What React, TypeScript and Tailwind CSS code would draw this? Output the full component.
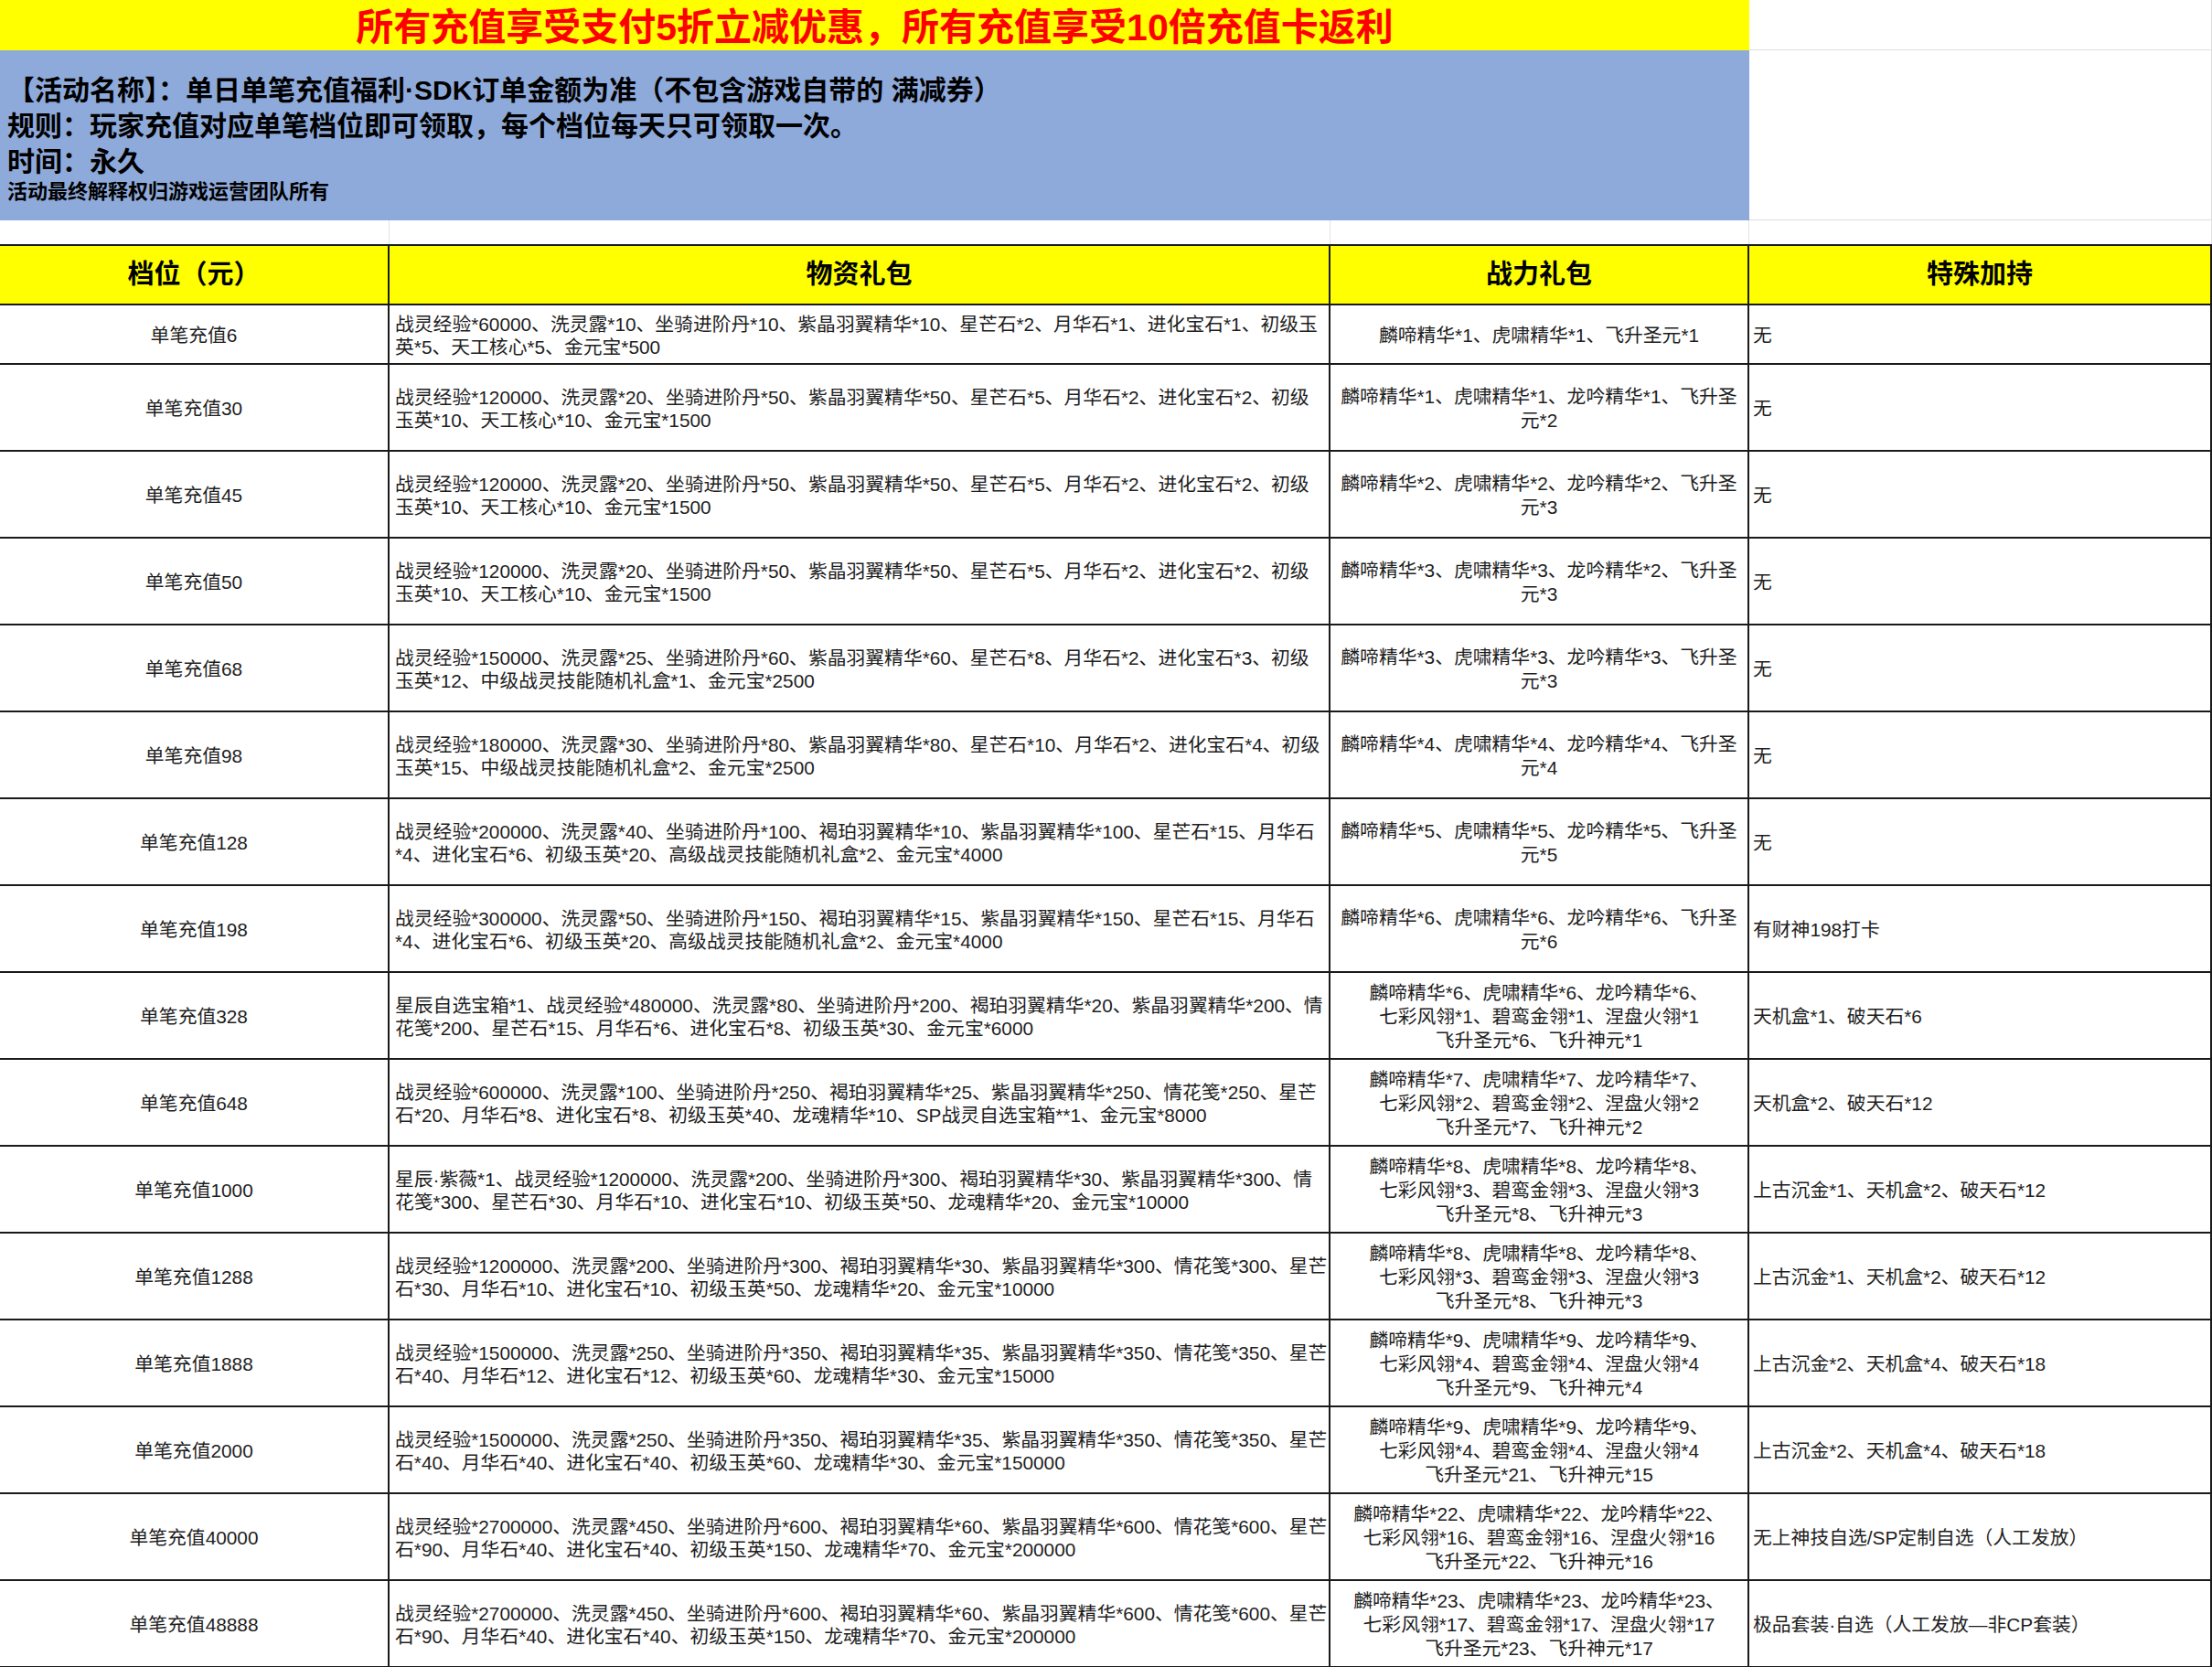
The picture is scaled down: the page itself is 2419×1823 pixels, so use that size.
type Row = {
  tier: string;
  goods: string[];
  power: string[];
  extra: string;
};

const rows: Row[] = [
  {
    tier: "单笔充值6",
    goods: [
      "战灵经验*60000、洗灵露*10、坐骑进阶丹*10、紫晶羽翼精华*10、星芒石*2、月华石*1、进化宝石*1、初级玉",
      "英*5、天工核心*5、金元宝*500",
    ],
    power: ["麟啼精华*1、虎啸精华*1、飞升圣元*1"],
    extra: "无",
  },
  {
    tier: "单笔充值30",
    goods: [
      "战灵经验*120000、洗灵露*20、坐骑进阶丹*50、紫晶羽翼精华*50、星芒石*5、月华石*2、进化宝石*2、初级",
      "玉英*10、天工核心*10、金元宝*1500",
    ],
    power: ["麟啼精华*1、虎啸精华*1、龙吟精华*1、飞升圣", "元*2"],
    extra: "无",
  },
  {
    tier: "单笔充值45",
    goods: [
      "战灵经验*120000、洗灵露*20、坐骑进阶丹*50、紫晶羽翼精华*50、星芒石*5、月华石*2、进化宝石*2、初级",
      "玉英*10、天工核心*10、金元宝*1500",
    ],
    power: ["麟啼精华*2、虎啸精华*2、龙吟精华*2、飞升圣", "元*3"],
    extra: "无",
  },
  {
    tier: "单笔充值50",
    goods: [
      "战灵经验*120000、洗灵露*20、坐骑进阶丹*50、紫晶羽翼精华*50、星芒石*5、月华石*2、进化宝石*2、初级",
      "玉英*10、天工核心*10、金元宝*1500",
    ],
    power: ["麟啼精华*3、虎啸精华*3、龙吟精华*2、飞升圣", "元*3"],
    extra: "无",
  },
  {
    tier: "单笔充值68",
    goods: [
      "战灵经验*150000、洗灵露*25、坐骑进阶丹*60、紫晶羽翼精华*60、星芒石*8、月华石*2、进化宝石*3、初级",
      "玉英*12、中级战灵技能随机礼盒*1、金元宝*2500",
    ],
    power: ["麟啼精华*3、虎啸精华*3、龙吟精华*3、飞升圣", "元*3"],
    extra: "无",
  },
  {
    tier: "单笔充值98",
    goods: [
      "战灵经验*180000、洗灵露*30、坐骑进阶丹*80、紫晶羽翼精华*80、星芒石*10、月华石*2、进化宝石*4、初级",
      "玉英*15、中级战灵技能随机礼盒*2、金元宝*2500",
    ],
    power: ["麟啼精华*4、虎啸精华*4、龙吟精华*4、飞升圣", "元*4"],
    extra: "无",
  },
  {
    tier: "单笔充值128",
    goods: [
      "战灵经验*200000、洗灵露*40、坐骑进阶丹*100、褐珀羽翼精华*10、紫晶羽翼精华*100、星芒石*15、月华石",
      "*4、进化宝石*6、初级玉英*20、高级战灵技能随机礼盒*2、金元宝*4000",
    ],
    power: ["麟啼精华*5、虎啸精华*5、龙吟精华*5、飞升圣", "元*5"],
    extra: "无",
  },
  {
    tier: "单笔充值198",
    goods: [
      "战灵经验*300000、洗灵露*50、坐骑进阶丹*150、褐珀羽翼精华*15、紫晶羽翼精华*150、星芒石*15、月华石",
      "*4、进化宝石*6、初级玉英*20、高级战灵技能随机礼盒*2、金元宝*4000",
    ],
    power: ["麟啼精华*6、虎啸精华*6、龙吟精华*6、飞升圣", "元*6"],
    extra: "有财神198打卡",
  },
  {
    tier: "单笔充值328",
    goods: [
      "星辰自选宝箱*1、战灵经验*480000、洗灵露*80、坐骑进阶丹*200、褐珀羽翼精华*20、紫晶羽翼精华*200、情",
      "花笺*200、星芒石*15、月华石*6、进化宝石*8、初级玉英*30、金元宝*6000",
    ],
    power: ["麟啼精华*6、虎啸精华*6、龙吟精华*6、", "七彩风翎*1、碧鸾金翎*1、涅盘火翎*1", "飞升圣元*6、飞升神元*1"],
    extra: "天机盒*1、破天石*6",
  },
  {
    tier: "单笔充值648",
    goods: [
      "战灵经验*600000、洗灵露*100、坐骑进阶丹*250、褐珀羽翼精华*25、紫晶羽翼精华*250、情花笺*250、星芒",
      "石*20、月华石*8、进化宝石*8、初级玉英*40、龙魂精华*10、SP战灵自选宝箱**1、金元宝*8000",
    ],
    power: ["麟啼精华*7、虎啸精华*7、龙吟精华*7、", "七彩风翎*2、碧鸾金翎*2、涅盘火翎*2", "飞升圣元*7、飞升神元*2"],
    extra: "天机盒*2、破天石*12",
  },
  {
    tier: "单笔充值1000",
    goods: [
      "星辰·紫薇*1、战灵经验*1200000、洗灵露*200、坐骑进阶丹*300、褐珀羽翼精华*30、紫晶羽翼精华*300、情",
      "花笺*300、星芒石*30、月华石*10、进化宝石*10、初级玉英*50、龙魂精华*20、金元宝*10000",
    ],
    power: ["麟啼精华*8、虎啸精华*8、龙吟精华*8、", "七彩风翎*3、碧鸾金翎*3、涅盘火翎*3", "飞升圣元*8、飞升神元*3"],
    extra: "上古沉金*1、天机盒*2、破天石*12",
  },
  {
    tier: "单笔充值1288",
    goods: [
      "战灵经验*1200000、洗灵露*200、坐骑进阶丹*300、褐珀羽翼精华*30、紫晶羽翼精华*300、情花笺*300、星芒",
      "石*30、月华石*10、进化宝石*10、初级玉英*50、龙魂精华*20、金元宝*10000",
    ],
    power: ["麟啼精华*8、虎啸精华*8、龙吟精华*8、", "七彩风翎*3、碧鸾金翎*3、涅盘火翎*3", "飞升圣元*8、飞升神元*3"],
    extra: "上古沉金*1、天机盒*2、破天石*12",
  },
  {
    tier: "单笔充值1888",
    goods: [
      "战灵经验*1500000、洗灵露*250、坐骑进阶丹*350、褐珀羽翼精华*35、紫晶羽翼精华*350、情花笺*350、星芒",
      "石*40、月华石*12、进化宝石*12、初级玉英*60、龙魂精华*30、金元宝*15000",
    ],
    power: ["麟啼精华*9、虎啸精华*9、龙吟精华*9、", "七彩风翎*4、碧鸾金翎*4、涅盘火翎*4", "飞升圣元*9、飞升神元*4"],
    extra: "上古沉金*2、天机盒*4、破天石*18",
  },
  {
    tier: "单笔充值2000",
    goods: [
      "战灵经验*1500000、洗灵露*250、坐骑进阶丹*350、褐珀羽翼精华*35、紫晶羽翼精华*350、情花笺*350、星芒",
      "石*40、月华石*40、进化宝石*40、初级玉英*60、龙魂精华*30、金元宝*150000",
    ],
    power: ["麟啼精华*9、虎啸精华*9、龙吟精华*9、", "七彩风翎*4、碧鸾金翎*4、涅盘火翎*4", "飞升圣元*21、飞升神元*15"],
    extra: "上古沉金*2、天机盒*4、破天石*18",
  },
  {
    tier: "单笔充值40000",
    goods: [
      "战灵经验*2700000、洗灵露*450、坐骑进阶丹*600、褐珀羽翼精华*60、紫晶羽翼精华*600、情花笺*600、星芒",
      "石*90、月华石*40、进化宝石*40、初级玉英*150、龙魂精华*70、金元宝*200000",
    ],
    power: ["麟啼精华*22、虎啸精华*22、龙吟精华*22、", "七彩风翎*16、碧鸾金翎*16、涅盘火翎*16", "飞升圣元*22、飞升神元*16"],
    extra: "无上神技自选/SP定制自选（人工发放）",
  },
  {
    tier: "单笔充值48888",
    goods: [
      "战灵经验*2700000、洗灵露*450、坐骑进阶丹*600、褐珀羽翼精华*60、紫晶羽翼精华*600、情花笺*600、星芒",
      "石*90、月华石*40、进化宝石*40、初级玉英*150、龙魂精华*70、金元宝*200000",
    ],
    power: ["麟啼精华*23、虎啸精华*23、龙吟精华*23、", "七彩风翎*17、碧鸾金翎*17、涅盘火翎*17", "飞升圣元*23、飞升神元*17"],
    extra: "极品套装·自选（人工发放—非CP套装）",
  },
];

const grid = "grid grid-cols-[426px_1029px_458px_506px]";

export default function App() {
  return (
    <div className="w-[2419px] bg-white text-[#1e1e1e] font-['Liberation_Sans','Noto_Sans_CJK_SC',sans-serif]">
      {/* notice block */}
      <div className="grid grid-cols-[1913px_506px]">
        <div className="h-[55px] bg-[#ffff00] flex items-center justify-center pt-[6px]">
          <span className="text-[41px] font-bold text-[#ff0000] leading-none whitespace-nowrap">
            所有充值享受支付5折立减优惠，所有充值享受10倍充值卡返利
          </span>
        </div>
        <div className="h-[55px] border-b border-[#dcdcdc] border-r" />
        <div className="h-[186px] bg-[#8eaadb] pl-2 pt-[24px] font-bold text-black">
          <p className="text-[30px] leading-[39px] whitespace-nowrap">
            【活动名称】：单日单笔充值福利·SDK订单金额为准（不包含游戏自带的 满减券）
          </p>
          <p className="text-[30px] leading-[39px] whitespace-nowrap">
            规则：玩家充值对应单笔档位即可领取，每个档位每天只可领取一次。
          </p>
          <p className="text-[30px] leading-[39px]">时间：永久</p>
          <p className="text-[22px] leading-[28px]">活动最终解释权归游戏运营团队所有</p>
        </div>
        <div className="h-[186px] border-b border-r border-[#dcdcdc]" />
      </div>

      {/* spacer row */}
      <div className={`${grid} h-[26px]`}>
        <div className="border-r border-[#e2e2e2]" />
        <div className="border-r border-[#e2e2e2]" />
        <div className="border-r border-[#e2e2e2]" />
        <div className="border-r border-[#e2e2e2]" />
      </div>

      {/* table */}
      <div className="border-t-2 border-[#1a1a1a]">
        <div className={`${grid} h-[65px] bg-[#ffff00] border-b-2 border-[#1a1a1a] text-[29px] font-bold text-black`}>
          <div className="flex items-center justify-center border-r-2 border-[#1a1a1a]">档位（元）</div>
          <div className="flex items-center justify-center border-r-2 border-[#1a1a1a]">物资礼包</div>
          <div className="flex items-center justify-center border-r-2 border-[#1a1a1a]">战力礼包</div>
          <div className="flex items-center justify-center border-r-2 border-[#1a1a1a]">特殊加持</div>
        </div>

        {rows.map((r, i) => (
          <div
            key={r.tier}
            className={`${grid} ${i === 0 ? "h-[65px]" : "h-[95px]"} border-b-2 border-[#1a1a1a] text-[20.8px]`}
          >
            <div className="flex items-center justify-center border-r-2 border-[#1a1a1a] whitespace-nowrap pt-[2px]">
              {r.tier}
            </div>
            <div className="flex flex-col justify-center pl-[6px] pt-[2px] border-r-2 border-[#1a1a1a] leading-[25px] overflow-hidden">
              {r.goods.map((l) => (
                <span key={l} className="whitespace-nowrap">
                  {l}
                </span>
              ))}
            </div>
            <div className="flex flex-col items-center justify-center pt-[2px] border-r-2 border-[#1a1a1a] leading-[26px] overflow-hidden">
              {r.power.map((l) => (
                <span key={l} className="whitespace-nowrap">
                  {l}
                </span>
              ))}
            </div>
            <div className="flex items-center pl-[4px] pt-[2px] border-r-2 border-[#1a1a1a] whitespace-nowrap">
              {r.extra}
            </div>
          </div>
        ))}
      </div>
    </div>
  );
}
